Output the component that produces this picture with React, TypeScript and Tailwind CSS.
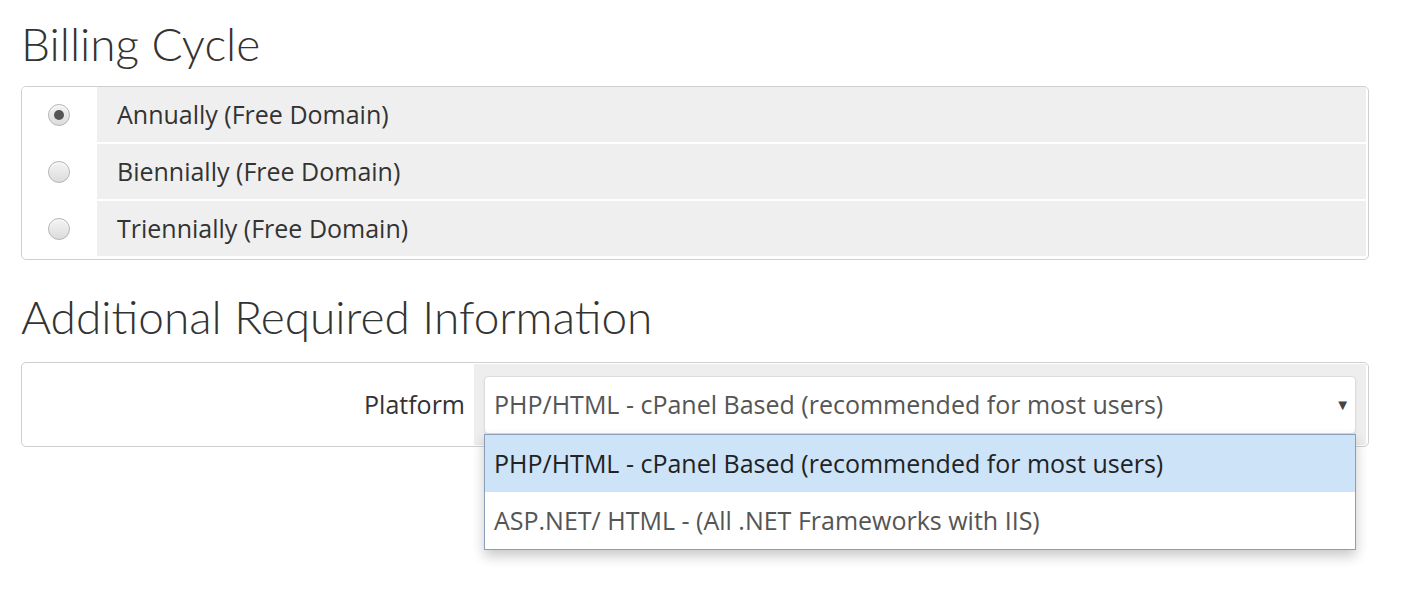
import { useState } from "react";

const cycles = [
  "Annually (Free Domain)",
  "Biennially (Free Domain)",
  "Triennially (Free Domain)",
];

const platforms = [
  "PHP/HTML - cPanel Based (recommended for most users)",
  "ASP.NET/ HTML - (All .NET Frameworks with IIS)",
];

function Radio({ checked }: { checked: boolean }) {
  return (
    <span className="flex h-[22px] w-[22px] items-center justify-center rounded-full border border-[#b5b5b5] bg-gradient-to-b from-[#f4f4f4] to-[#dcdcdc] shadow-[inset_0_1px_1px_rgba(255,255,255,0.8)]">
      {checked && <span className="h-[10px] w-[10px] rounded-full bg-[#555]" />}
    </span>
  );
}

export default function App() {
  const [cycle, setCycle] = useState(0);

  return (
    <div className="h-[602px] w-[1402px] bg-white pl-[21px] pr-[33px] pt-[14px] font-['Open_Sans',sans-serif] text-[#333]">
      <h2 className="font-['Lato',sans-serif] text-[46px] font-light leading-[60px] text-[#333]">
        Billing Cycle
      </h2>

      <div className="mt-[12px] overflow-hidden rounded-[5px] border border-[#cfcfcf] pb-[3px] pr-[2px]">
        {cycles.map((c, i) => (
          <div
            key={c}
            onClick={() => setCycle(i)}
            className={`flex h-[55px] cursor-pointer ${i > 0 ? "mt-[2px]" : ""}`}
          >
            <div className="flex w-[75px] items-center justify-center bg-white pr-[2px]">
              <Radio checked={cycle === i} />
            </div>
            <div className="flex flex-1 items-center bg-[#efefef] pl-[20px] text-[25px]">
              {c}
            </div>
          </div>
        ))}
      </div>

      <h2 className="mt-[27px] font-['Lato',sans-serif] text-[46px] font-light leading-[60px] text-[#333]">
        Additional Required Information
      </h2>

      <div className="mt-[15px] flex h-[85px] rounded-[5px] border border-[#cfcfcf] py-[1px] pr-[2px]">
        <div className="flex w-[452px] items-center justify-end pr-[9px] text-[25px]">
          Platform
        </div>
        <div className="relative flex flex-1 items-center bg-[#eeeeee] px-[10px]">
          <div className="flex h-[58px] w-full items-center justify-between rounded-[4px] border border-[#dcdcdc] bg-white pl-[9px] pr-[5px] text-[25px] text-[#555] shadow-[0_1px_2px_rgba(0,0,0,0.08)]">
            <span>{platforms[0]}</span>
            <span className="text-[15px] text-[#444]">▼</span>
          </div>
          <div className="absolute left-[10px] right-[10px] top-[70px] z-10 border border-[#8c9db8] bg-white shadow-[0_6px_12px_rgba(0,0,0,0.22)]">
            <div className="flex h-[57px] items-center bg-[#cce3f8] pl-[9px] text-[25px] text-[#222]">
              {platforms[0]}
            </div>
            <div className="flex h-[57px] items-center pl-[9px] text-[25px] text-[#555]">
              {platforms[1]}
            </div>
          </div>
        </div>
      </div>
    </div>
  );
}
